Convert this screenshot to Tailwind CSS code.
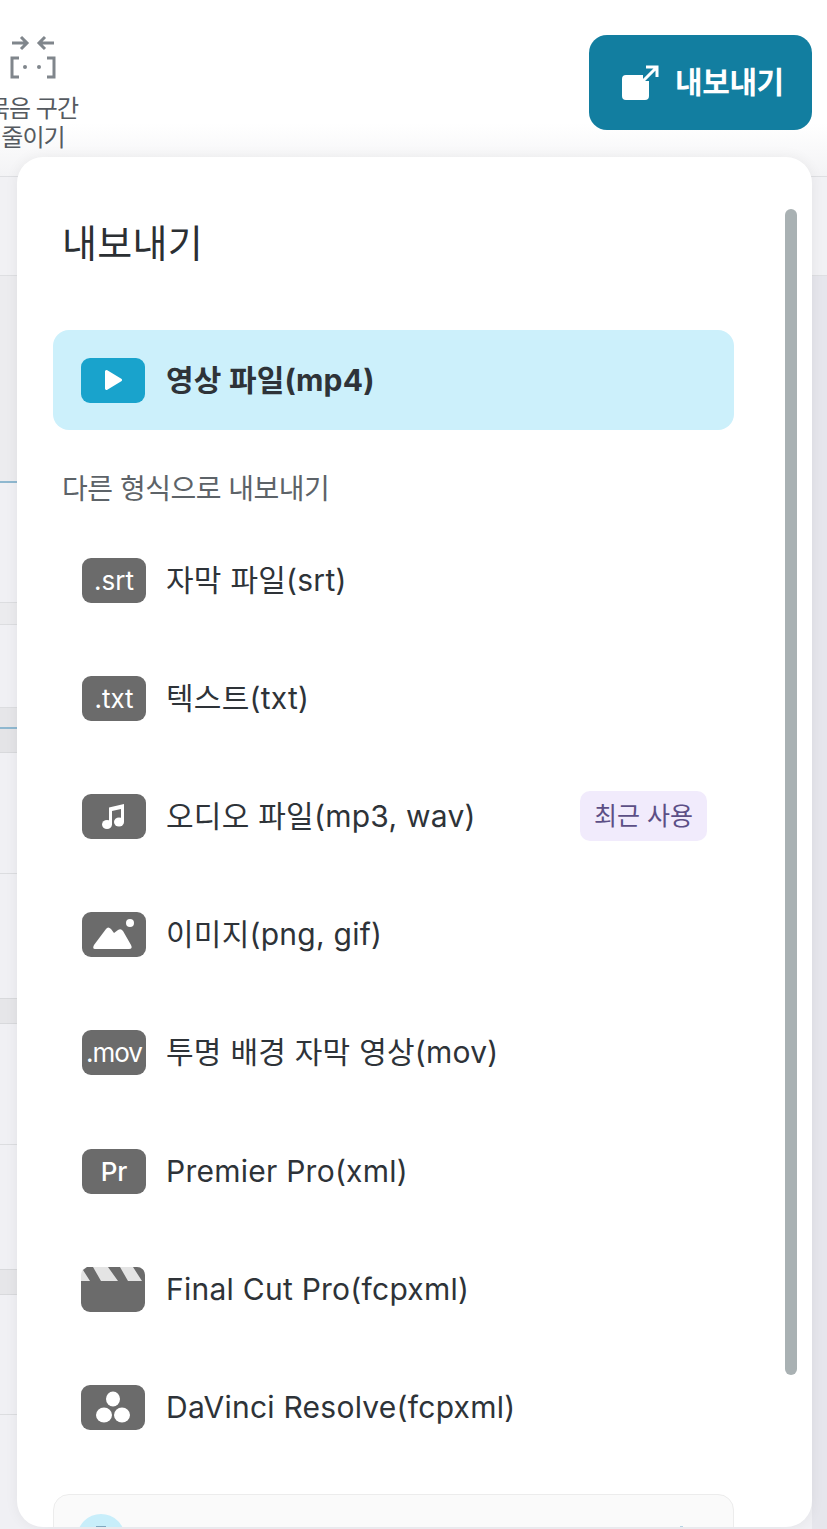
<!DOCTYPE html>
<html lang="ko">
  <head>
    <meta charset="UTF-8" />
    <title>내보내기</title>
    <script src="https://cdn.jsdelivr.net/npm/@tailwindcss/browser@4"></script>
  </head>
  <body class="font-[Inter,'Noto_Sans_CJK_KR',sans-serif] text-[#2e3338]">
    <div class="relative w-[827px] h-[1529px] overflow-hidden bg-[#e6e6ec]">
      <!-- toolbar -->
      <header class="h-[177px] flex justify-between items-start border-b border-[#dedfe2] bg-gradient-to-b from-white from-70% to-[#f3f3f5] pr-[15px]">
        <div class="ml-[-32px] w-[130px] pt-[33px] flex flex-col items-center text-[#555a60]">
          <svg class="w-[48px] h-[46px]" viewBox="0 0 48 46" fill="none" stroke="#80868c" stroke-width="3">
            <path d="M3 10h15M12 4l6 6-6 6M45 10H30M36 4l-6 6 6 6" />
            <path d="M10 25H3v19h7M38 25h7v19h-7" />
            <circle cx="16" cy="34" r="2" fill="#80868c" stroke="none" />
            <circle cx="30" cy="34" r="2" fill="#80868c" stroke="none" />
          </svg>
          <p class="mt-[15px] text-[24px] leading-[29px] tracking-[-1px] text-center">묵음 구간<br />줄이기</p>
        </div>
        <button class="mt-[35px] w-[223px] h-[95px] rounded-[18px] bg-[#127ea0] flex items-center pl-[33px] gap-[15px] text-white">
          <svg class="w-[38px] h-[36px]" viewBox="0 0 38 36" fill="none">
            <path d="M4 10h17v6h6v15a4 4 0 0 1-4 4H4a4 4 0 0 1-4-4V14a4 4 0 0 1 4-4z" fill="#fff" />
            <path d="M19 18 34 3M24 2h11v10" stroke="#fff" stroke-width="3" />
          </svg>
          <span class="text-[30px] font-bold tracking-[-0.4px]">내보내기</span>
        </button>
      </header>

      <div class="h-[99px] border-b border-[#dedfe2] bg-[#f1f1f4]"></div>

      <!-- timeline behind the popup -->
      <div class="w-[812px] bg-[#f0f0f4]">
        <div class="h-[207px] border-b-2 border-[#8fb8d0] bg-[#ececef]"></div>
        <div class="h-[120px] border-b border-[#dcdde0]"></div>
        <div class="h-[22px] border-b border-[#dcdde0] bg-[#ebebee]"></div>
        <div class="h-[83px] border-b border-[#dcdde0]"></div>
        <div class="h-[21px] border-b-2 border-[#8fb8d0] bg-[#e6e6e9]"></div>
        <div class="h-[24px] border-b border-[#d8d9dc] bg-[#e4e4e7]"></div>
        <div class="h-[121px] border-b border-[#dcdde0]"></div>
        <div class="h-[124px]"></div>
        <div class="h-[26px] border-y border-[#d8d9dc] bg-[#e6e6e9]"></div>
        <div class="h-[121px] border-b border-[#dcdde0]"></div>
        <div class="h-[124px]"></div>
        <div class="h-[26px] border-y border-[#d8d9dc] bg-[#e6e6e9]"></div>
        <div class="h-[120px] border-b border-[#dcdde0]"></div>
        <div class="h-[114px]"></div>
      </div>

      <!-- export popup -->
      <div class="absolute left-[17px] top-[157px] w-[795px] h-[1370px] rounded-[26px] bg-white overflow-hidden shadow-[0_0_14px_rgba(0,0,0,0.06)]">
        <div class="absolute right-[15px] top-[52px] w-[12px] h-[1166px] rounded-full bg-[#a9b1b3]"></div>
        <div class="pl-[36px] w-[717px]">
          <h2 class="pl-[9px] pt-[59px] h-[173px] text-[38px] leading-[54px] tracking-[0.3px] text-[#2b2f33]">내보내기</h2>

          <div class="h-[100px] rounded-[16px] bg-[#ccf0fb] flex items-center pl-[28px] gap-[21px]">
            <span class="w-[64px] h-[45px] rounded-[9px] bg-[#19a3cc] flex items-center justify-center">
              <svg class="w-[20px] h-[22px]" viewBox="0 0 20 22"><path d="M2 2.500a1.500 1.500 0 0 1 2.300-1.300l14 8.500a1.500 1.500 0 0 1 0 2.600l-14 8.500A1.500 1.500 0 0 1 2 19.500z" fill="#fff" /></svg>
            </span>
            <span class="text-[30px] font-bold tracking-[0.2px]">영상 파일(mp4)</span>
          </div>

          <p class="pl-[9px] mt-[40px] h-[32px] text-[28px] leading-[38px] tracking-[-0.5px] text-[#5d6368]">다른 형식으로 내보내기</p>

          <ul class="mt-[19px] text-[30px] tracking-[0.25px]">
            <li class="h-[118.2px] flex items-center pl-[29px] gap-[20px]">
              <span class="w-[64px] h-[45px] rounded-[9px] bg-[#6b6b6b] flex items-center justify-center text-white text-[26px] tracking-normal">.srt</span>
              <span>자막 파일(srt)</span>
            </li>
            <li class="h-[118.2px] flex items-center pl-[29px] gap-[20px]">
              <span class="w-[64px] h-[45px] rounded-[9px] bg-[#6b6b6b] flex items-center justify-center text-white text-[26px] tracking-normal">.txt</span>
              <span>텍스트(txt)</span>
            </li>
            <li class="h-[118.2px] flex items-center pl-[29px] gap-[20px]">
              <span class="w-[64px] h-[45px] rounded-[9px] bg-[#6b6b6b] flex items-center justify-center">
                <svg class="w-[28px] h-[28px]" viewBox="0 0 28 28" fill="#fff">
                  <path d="M9 5.500 24 2v18h-3V7L12 9v14H9z" />
                  <ellipse cx="7" cy="22.500" rx="5" ry="4.500" />
                  <ellipse cx="19" cy="20" rx="5" ry="4.500" />
                </svg>
              </span>
              <span>오디오 파일(mp3, wav)</span>
              <span class="ml-auto mr-[27px] w-[127px] h-[50px] justify-center rounded-[10px] bg-[#f1ebfc] flex items-center text-[25px] tracking-normal text-[#5c4f86]">최근 사용</span>
            </li>
            <li class="h-[118.2px] flex items-center pl-[29px] gap-[20px]">
              <span class="w-[64px] h-[45px] rounded-[9px] bg-[#6b6b6b] flex items-center justify-center">
                <svg class="w-[64px] h-[45px]" viewBox="0 0 64 45" fill="#fff">
                  <path d="M13 37Q10 37 12 33L24 17Q26 14 29 17L32 21 36 18Q39 16 41 19L49 33Q51 37 47 37z" />
                  <circle cx="48" cy="11" r="4" />
                </svg>
              </span>
              <span>이미지(png, gif)</span>
            </li>
            <li class="h-[118.2px] flex items-center pl-[29px] gap-[20px]">
              <span class="w-[64px] h-[45px] rounded-[9px] bg-[#6b6b6b] flex items-center justify-center text-white text-[26px] tracking-[-1px]">.mov</span>
              <span>투명 배경 자막 영상(mov)</span>
            </li>
            <li class="h-[118.2px] flex items-center pl-[29px] gap-[20px]">
              <span class="w-[64px] h-[45px] rounded-[9px] bg-[#6b6b6b] flex items-center justify-center text-white text-[26px] font-medium tracking-normal">Pr</span>
              <span>Premier Pro(xml)</span>
            </li>
            <li class="h-[118.2px] flex items-center pl-[28px] gap-[21px]">
              <svg class="w-[64px] h-[45px]" viewBox="0 0 64 45">
                <path d="M0 14V8a8 8 0 0 1 8-8h48a8 8 0 0 1 8 8v6z" fill="#e4e4e4" />
                <path d="M2 3 6 0h6l8 14H9zM27 0h12l8 14H37zM52 0h4a8 8 0 0 1 8 8v6h-3z" fill="#6b6b6b" />
                <path d="M0 14h64v22a9 9 0 0 1-9 9H9a9 9 0 0 1-9-9z" fill="#6b6b6b" />
              </svg>
              <span>Final Cut Pro(fcpxml)</span>
            </li>
            <li class="h-[118.2px] flex items-center pl-[28px] gap-[21px]">
              <span class="w-[64px] h-[45px] rounded-[9px] bg-[#6b6b6b] flex items-center justify-center">
                <svg class="w-[36px] h-[32px]" viewBox="0 0 36 32" fill="#fff">
                  <ellipse cx="18" cy="8" rx="7" ry="7.500" />
                  <ellipse cx="9" cy="24" rx="8" ry="7.500" />
                  <ellipse cx="27" cy="24" rx="8" ry="7.500" />
                </svg>
              </span>
              <span>DaVinci Resolve(fcpxml)</span>
            </li>
          </ul>

          <div class="mt-[27px] h-[60px] rounded-t-[16px] border border-[#ececec] bg-[#fafafa] pl-[23px] pr-[50px] pt-[19px] flex justify-between items-start">
            <div class="w-[48px] h-[48px] rounded-full bg-[#c8eefa] flex justify-center pt-[12px]">
              <div class="w-[10px] h-[2px] bg-[#7fa8c0]"></div>
            </div>
            <div class="mt-[12px] w-[3px] h-[6px] bg-[#b8d4e6]"></div>
          </div>
        </div>
      </div>
    </div>
  </body>
</html>
